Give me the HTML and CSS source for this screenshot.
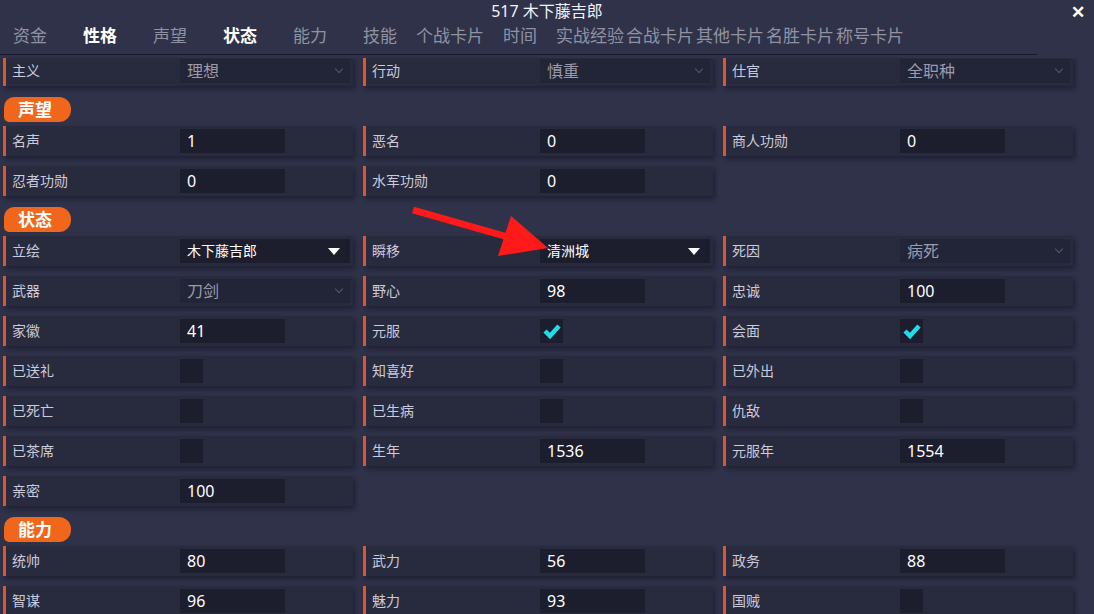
FILE: index.html
```html
<!DOCTYPE html>
<html lang="zh-CN">
<head>
    <meta charset="UTF-8">
    <title>517 木下藤吉郎</title>
    <link rel="stylesheet" href="styles.css">
</head>
<body>
    <div class="titlebar">
        <span></span>
        <div class="title">517 木下藤吉郎</div>
        <div class="close">✕</div>
    </div>
    <div class="tabs">
        <div class="tab">资金</div>
        <div class="tab active">性格</div>
        <div class="tab">声望</div>
        <div class="tab active">状态</div>
        <div class="tab">能力</div>
        <div class="tab">技能</div>
        <div class="tab">个战卡片</div>
        <div class="tab">时间</div>
        <div class="tab">实战经验</div>
        <div class="tab">合战卡片</div>
        <div class="tab">其他卡片</div>
        <div class="tab">名胜卡片</div>
        <div class="tab">称号卡片</div>
    </div>
    <div class="divider"></div>

    <div class="viewport">
        <div class="content">
            <div class="grid">
                <div class="cell"><span class="label">主义</span><div class="select disabled">理想<i class="chev"></i></div></div>
                <div class="cell"><span class="label">行动</span><div class="select disabled">慎重<i class="chev"></i></div></div>
                <div class="cell"><span class="label">仕官</span><div class="select disabled">全职种<i class="chev"></i></div></div>
            </div>

            <div class="section"><span class="pill">声望</span></div>
            <div class="grid">
                <div class="cell"><span class="label">名声</span><div class="input">1</div></div>
                <div class="cell"><span class="label">恶名</span><div class="input">0</div></div>
                <div class="cell"><span class="label">商人功勋</span><div class="input">0</div></div>
                <div class="cell"><span class="label">忍者功勋</span><div class="input">0</div></div>
                <div class="cell"><span class="label">水军功勋</span><div class="input">0</div></div>
            </div>

            <div class="section"><span class="pill">状态</span></div>
            <div class="grid">
                <div class="cell"><span class="label">立绘</span><div class="select">木下藤吉郎<i class="tri"></i></div></div>
                <div class="cell"><span class="label">瞬移</span><div class="select">清洲城<i class="tri"></i></div></div>
                <div class="cell"><span class="label">死因</span><div class="select disabled">病死<i class="chev"></i></div></div>

                <div class="cell"><span class="label">武器</span><div class="select disabled">刀剑<i class="chev"></i></div></div>
                <div class="cell"><span class="label">野心</span><div class="input">98</div></div>
                <div class="cell"><span class="label">忠诚</span><div class="input">100</div></div>

                <div class="cell"><span class="label">家徽</span><div class="input">41</div></div>
                <div class="cell"><span class="label">元服</span><div class="check on"><svg viewBox="0 0 23 24"><polyline points="5,12 10,17 19,7"/></svg></div></div>
                <div class="cell"><span class="label">会面</span><div class="check on"><svg viewBox="0 0 23 24"><polyline points="5,12 10,17 19,7"/></svg></div></div>

                <div class="cell"><span class="label">已送礼</span><div class="check"></div></div>
                <div class="cell"><span class="label">知喜好</span><div class="check"></div></div>
                <div class="cell"><span class="label">已外出</span><div class="check"></div></div>

                <div class="cell"><span class="label">已死亡</span><div class="check"></div></div>
                <div class="cell"><span class="label">已生病</span><div class="check"></div></div>
                <div class="cell"><span class="label">仇敌</span><div class="check"></div></div>

                <div class="cell"><span class="label">已茶席</span><div class="check"></div></div>
                <div class="cell"><span class="label">生年</span><div class="input">1536</div></div>
                <div class="cell"><span class="label">元服年</span><div class="input">1554</div></div>

                <div class="cell"><span class="label">亲密</span><div class="input">100</div></div>
            </div>

            <div class="section"><span class="pill">能力</span></div>
            <div class="grid">
                <div class="cell"><span class="label">统帅</span><div class="input">80</div></div>
                <div class="cell"><span class="label">武力</span><div class="input">56</div></div>
                <div class="cell"><span class="label">政务</span><div class="input">88</div></div>
                <div class="cell"><span class="label">智谋</span><div class="input">96</div></div>
                <div class="cell"><span class="label">魅力</span><div class="input">93</div></div>
                <div class="cell"><span class="label">国贼</span><div class="check"></div></div>
            </div>
        </div>
    </div>

    <!-- annotation arrow -->
    <svg class="arrow" width="1094" height="614" viewBox="0 0 1094 614">
        <line x1="413" y1="210" x2="508" y2="237" stroke="#ff1a1a" stroke-width="7"/>
        <polygon points="511,216 548,248 498,256" fill="#ff1a1a"/>
    </svg>
</body>
</html>
```

FILE: styles.css
```css
body {
    margin: 0;
    width: 1094px;
    height: 614px;
    overflow: hidden;
    background-color: #2f3249;
    font-family: "Noto Sans", "Noto Sans CJK SC", sans-serif;
    color: #fff;
    position: relative;
}
.titlebar {
    display: grid;
    grid-template-columns: 1fr auto 1fr;
    height: 20px;
    align-items: center;
}
.title {
    font-size: 16px;
    color: #f2f2f6;
    line-height: 20px;
}
.close {
    justify-self: end;
    margin-right: 9px;
    font-size: 17px;
    font-weight: bold;
    color: #fff;
    line-height: 20px;
    margin-top: 2px;
}
.tabs {
    display: flex;
    margin-left: -5px;
    height: 32px;
}
.tab {
    width: 70px;
    text-align: center;
    font-size: 17px;
    line-height: 32px;
    color: #9092a4;
    white-space: nowrap;
}
.tab.active {
    color: #fff;
    font-weight: bold;
}
.divider {
    width: 1037px;
    height: 1px;
    margin-top: 2px;
    background-color: #16182a;
}
.viewport {
    margin-top: 3px;
    height: 556px;
    overflow: hidden;
}
.content {
    margin-top: -2px;
    padding-left: 3px;
}
.grid {
    display: grid;
    grid-template-columns: repeat(3, 350px);
    column-gap: 10px;
    row-gap: 10px;
}
.section {
    padding: 11px 0 4px 1px;
    height: 25px;
}
.pill {
    display: inline-block;
    height: 25px;
    line-height: 25px;
    padding: 0 19px 0 14px;
    font-size: 17px;
    font-weight: bold;
    background-color: #f0661b;
    border-radius: 10px 12px 12px 5px;
}
.cell {
    display: flex;
    align-items: center;
    height: 30px;
    background-color: #282a3e;
    border-left: 3px solid #e0552b;
    box-shadow: 2px 3px 5px rgba(10, 12, 22, 0.45);
}
.label {
    width: 168px;
    padding-left: 6px;
    font-size: 14px;
    line-height: 16px;
    color: #cacbdc;
    white-space: nowrap;
}
.input {
    width: 98px;
    height: 24px;
    padding-left: 7px;
    background-color: #1c1d2d;
    font-size: 16px;
    line-height: 24px;
    color: #fff;
}
.select {
    position: relative;
    width: 163px;
    height: 21px;
    padding: 3px 0 0 7px;
    background-color: #1c1d2d;
    font-size: 14px;
    line-height: 18px;
    color: #fff;
}
.select.disabled {
    background-color: #222437;
    font-size: 16px;
    color: #9a9bac;
}
.tri {
    position: absolute;
    right: 10px;
    top: 9px;
    border-left: 6px solid transparent;
    border-right: 6px solid transparent;
    border-top: 7px solid #fff;
}
.chev {
    position: absolute;
    right: 8px;
    top: 7px;
    width: 5px;
    height: 5px;
    border-right: 1px solid #55586c;
    border-bottom: 1px solid #55586c;
    transform: rotate(45deg);
}
.check {
    width: 23px;
    height: 24px;
    background-color: #1c1d2d;
}
.check svg {
    display: block;
    width: 23px;
    height: 24px;
}
.check polyline {
    fill: none;
    stroke: #22dbe8;
    stroke-width: 4.5;
}
.arrow {
    position: absolute;
    left: 0;
    top: 0;
    pointer-events: none;
}
```
